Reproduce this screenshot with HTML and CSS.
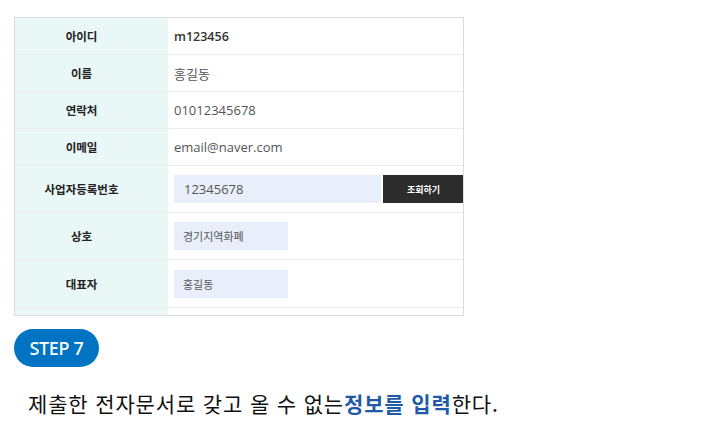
FILE: index.html
```html
<!DOCTYPE html>
<html lang="ko">
<head>
<meta charset="utf-8">
<link rel="stylesheet" href="styles.css">
</head>
<body>
<div class="shot">
  <div class="row r1"><div class="lab">아이디</div><div class="val strong">m123456</div></div>
  <div class="row r1"><div class="lab">이름</div><div class="val">홍길동</div></div>
  <div class="row r1"><div class="lab">연락처</div><div class="val">01012345678</div></div>
  <div class="row r1"><div class="lab">이메일</div><div class="val">email@naver.com</div></div>
  <div class="row r2"><div class="lab">사업자등록번호</div><div class="val"><span class="inp wide">12345678</span><span class="btn">조회하기</span></div></div>
  <div class="row r2"><div class="lab">상호</div><div class="val"><span class="inp small">경기지역화폐</span></div></div>
  <div class="row r2"><div class="lab">대표자</div><div class="val"><span class="inp small">홍길동</span></div></div>
  <div class="row r3"><div class="lab"></div><div class="val"></div></div>
</div>
<div class="step">STEP 7</div>
<p class="desc">제출한 전자문서로 갖고 올 수 없는<b>정보를 입력</b>한다.</p>
</body>
</html>
```
FILE: styles.css
```css
html, body { margin: 0; padding: 0; background: #fff; }
body { width: 708px; height: 434px; overflow: hidden; font-family: "Open Sans", "Noto Sans CJK KR", sans-serif; }
.shot {
  margin: 17px 0 0 14px;
  width: 448px;
  height: 297px;
  border: 1px solid #dcdcdc;
  overflow: hidden;
  background: #fff;
}
.row { display: flex; border-bottom: 1px solid #ececec; }
.r1 { height: 36px; }
.r2 { height: 46px; }
.r3 { height: 40px; }
.row:nth-child(7) { height: 47px; }
.lab {
  width: 153px;
  flex: none;
  box-sizing: border-box;
  padding-right: 20px;
  background: #e9f7f7;
  display: flex; align-items: center; justify-content: center;
  font-family: "Noto Sans CJK KR", sans-serif;
  font-weight: 700; font-size: 11.5px; color: #222;
}
.val {
  flex: 1;
  display: flex; align-items: center;
  padding-left: 6px;
  font-size: 13px; color: #555;
}
.val.strong { font-weight: 600; color: #333; font-size: 12.5px; }
.inp {
  background: #e8effb;
  height: 28px;
  display: flex; align-items: center;
  box-sizing: border-box;
  padding-left: 10px;
  color: #555;
}
.inp.wide { width: 207px; font-size: 13px; }
.inp.small { width: 114px; padding-left: 9px; font-size: 11px; font-family: "Noto Sans CJK KR", sans-serif; }
.btn {
  margin-left: 2px;
  width: 81px; height: 28px;
  background: #2c2c2c;
  color: #fff;
  display: flex; align-items: center; justify-content: center;
  font-family: "Noto Sans CJK KR", sans-serif;
  font-size: 9px; font-weight: 700;
}
.step {
  margin: 13px 0 0 14px;
  width: 85px; height: 38px;
  border-radius: 19px;
  background: #0073c2;
  color: #fff;
  display: flex; align-items: center; justify-content: center;
  font-family: "Noto Sans", sans-serif;
  font-size: 18px; font-weight: 500;
  letter-spacing: -0.3px;
}
.desc {
  margin: 21px 0 0 28px;
  font-family: "Noto Sans CJK KR", sans-serif;
  font-size: 21px; line-height: 30px; color: #111;
  letter-spacing: 0.85px;
}
.desc b { color: #1f5aa8; font-weight: 700; }
```
